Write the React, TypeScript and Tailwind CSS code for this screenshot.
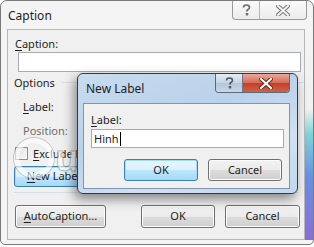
const ui = { fontFamily: '"Segoe UI", "Noto Sans", "Open Sans", sans-serif' };

function Btn({
  children,
  focus = false,
  className = "",
}: {
  children: React.ReactNode;
  focus?: boolean;
  className?: string;
}) {
  return (
    <div
      className={
        "flex items-center justify-center rounded-[3px] border text-[11px] text-[#1e1e1e] " +
        (focus
          ? "border-[#3c7fb1] bg-[linear-gradient(#eaf6fd_0%,#d9f0fc_50%,#bee6fd_51%,#a7d9f5_100%)] shadow-[inset_0_0_0_1px_#a3dcf6] "
          : "border-[#707070] bg-[linear-gradient(#f2f2f2_0%,#ebebeb_50%,#dddddd_51%,#cfcfcf_100%)] shadow-[inset_0_0_0_1px_#fcfcfc] ") +
        className
      }
    >
      {children}
    </div>
  );
}

function U({ c }: { c: string }) {
  return <span className="underline underline-offset-2">{c}</span>;
}

function HelpGlyph({ color = "#5a5a5a" }: { color?: string }) {
  return (
    <svg width="9" height="12" viewBox="0 0 9 12">
      <path
        d="M1.5 3.5 C1.5 1.5 3 1 4.5 1 C6.5 1 7.5 2 7.5 3.5 C7.5 5 6 5.5 5 6.3 L5 7.5"
        fill="none"
        stroke={color}
        strokeWidth="1.6"
      />
      <rect x="3.8" y="9" width="2.4" height="2.4" fill={color} />
    </svg>
  );
}

function CloseGlyph({ color, outline }: { color: string; outline: string }) {
  return (
    <svg width="14" height="11" viewBox="0 0 14 11">
      <path
        d="M2 1 L12 10 M12 1 L2 10"
        stroke={outline}
        strokeWidth="4"
        strokeLinecap="square"
      />
      <path
        d="M2 1 L12 10 M12 1 L2 10"
        stroke={color}
        strokeWidth="2"
        strokeLinecap="square"
      />
    </svg>
  );
}

export default function App() {
  return (
    <div className="relative h-[247px] w-[314px] overflow-hidden bg-white" style={ui}>
      {/* Caption window */}
      <div className="flex h-[245px] w-[314px] flex-col rounded-t-[7px] rounded-b-[5px] border border-[#7a7a7a] bg-[#f4f4f4]">
        <div className="flex h-[28px] shrink-0 items-start">
          <span className="mt-[6px] pl-[7px] text-[12px] text-[#1e1e1e]">Caption</span>
          <div className="ml-auto mr-[6px] flex h-[19px] overflow-hidden rounded-b-[4px] border border-t-0 border-[#9a9a9a] bg-[linear-gradient(#fafafa,#ececec)]">
            <div className="flex w-[27px] items-center justify-center border-r border-[#b5b5b5]">
              <HelpGlyph color="#6a6a6a" />
            </div>
            <div className="flex w-[46px] items-center justify-center">
              <CloseGlyph color="#f4f4f4" outline="#7a7a7a" />
            </div>
          </div>
        </div>
        <div className="flex flex-1 pl-[6px] pb-[4px]">
          <div className="flex flex-1 flex-col border border-[#b8b8b8] bg-[#f0f0f0] text-[11px] text-[#1e1e1e]">
            <div className="mt-[6px] ml-[7px] leading-[15px]">
              <U c="C" />aption:
            </div>
            <div className="mt-[1px] ml-[10px] mr-[3px] h-[20px] border border-[#a5acb5] bg-white" />
            <div className="mt-[3px] ml-[6px] flex items-center gap-[6px] leading-[15px]">
              <span>Options</span>
              <div className="h-px flex-1 bg-[#d5dfe5]" />
            </div>
            <div className="mt-[9px] ml-[15px] leading-[15px]">
              <U c="L" />abel:
            </div>
            <div className="mt-[9px] ml-[15px] leading-[15px] text-[#6d6d6d]">Position:</div>
            <div className="mt-[8px] ml-[7px] flex items-center gap-[5px] leading-[15px]">
              <div className="h-[13px] w-[13px] border border-[#8f8f8f] bg-[linear-gradient(135deg,#dcdcdc,#fbfbfb)]" />
              <span>
                <U c="E" />xclude label from caption
              </span>
            </div>
            <Btn focus className="mt-[5px] ml-[6px] h-[21px] w-[88px]">
              <span>
                <U c="N" />ew Label...
              </span>
            </Btn>
            <div className="mt-[5px] mx-[6px] h-px bg-[#d5dfe5]" />
            <div className="mt-[12px] flex items-center">
              <Btn className="ml-[7px] h-[23px] w-[91px]">
                <span>
                  <U c="A" />utoCaption...
                </span>
              </Btn>
              <Btn className="ml-[35px] h-[23px] w-[74px]">OK</Btn>
              <Btn className="ml-[10px] h-[23px] w-[75px]">Cancel</Btn>
            </div>
          </div>
          <div className="w-[8px] bg-[linear-gradient(#f4f4f4_0%,#f0f0f0_38%,#7fd3d6_50%,#6b8fe0_70%,#8a6fd0_100%)]" />
        </div>
      </div>

      {/* Watermark */}
      <div className="pointer-events-none absolute left-[14px] top-[138px] flex items-center text-[36px] font-bold leading-none text-white/60 [-webkit-text-stroke:1px_rgba(110,110,110,0.45)]">
        <div className="mr-[1px] h-[40px] w-[40px] rounded-full border-[5px] border-white/60 shadow-[0_0_0_1px_rgba(110,110,110,0.35)]" />
        <span>uantrimang</span>
      </div>

      {/* New Label dialog */}
      <div className="absolute left-[77px] top-[73px] flex h-[121px] w-[221px] flex-col rounded-[6px] border border-[#2e3a46] bg-[linear-gradient(160deg,#c9dcef_0%,#b9d1ea_40%,#cfe0f1_70%,#c3d8ed_100%)] shadow-[-3px_5px_12px_rgba(0,0,0,0.45)]">
        <div className="flex h-[28px] shrink-0 items-start">
          <span className="mt-[6px] pl-[8px] text-[12px] text-[#1e1e1e]">New Label</span>
          <div className="ml-auto mr-[7px] flex h-[19px] overflow-hidden rounded-b-[4px] border border-t-0 border-[#5a6a7a]">
            <div className="flex w-[27px] items-center justify-center border-r border-[#6a7a8a] bg-[linear-gradient(#e4ecf5,#c6d4e3_50%,#b5c6d9_51%,#c9d7e6)]">
              <HelpGlyph color="#4f5a66" />
            </div>
            <div className="flex w-[46px] items-center justify-center bg-[linear-gradient(#e9a99a,#d56a55_50%,#c2402a_51%,#d0604a)]">
              <CloseGlyph color="#ffffff" outline="#6b2a20" />
            </div>
          </div>
        </div>
        <div className="ml-[5px] mr-[7px] mt-[1px] flex h-[86px] flex-col border border-[#8195ad] bg-[#f0f0f0] text-[11px] text-[#1e1e1e]">
          <div className="mt-[8px] ml-[7px] leading-[15px]">
            <U c="L" />abel:
          </div>
          <div className="mt-[2px] ml-[7px] mr-[5px] flex h-[19px] items-center border border-[#a5acb5] bg-white pl-[2px] leading-[15px]">
            <span>Hình</span>
            <span className="ml-[1px] h-[14px] w-px bg-black" />
          </div>
          <div className="mt-[11px] flex">
            <Btn focus className="ml-[40px] h-[22px] w-[74px]">OK</Btn>
            <Btn className="ml-[10px] h-[22px] w-[74px]">Cancel</Btn>
          </div>
        </div>
      </div>
    </div>
  );
}
